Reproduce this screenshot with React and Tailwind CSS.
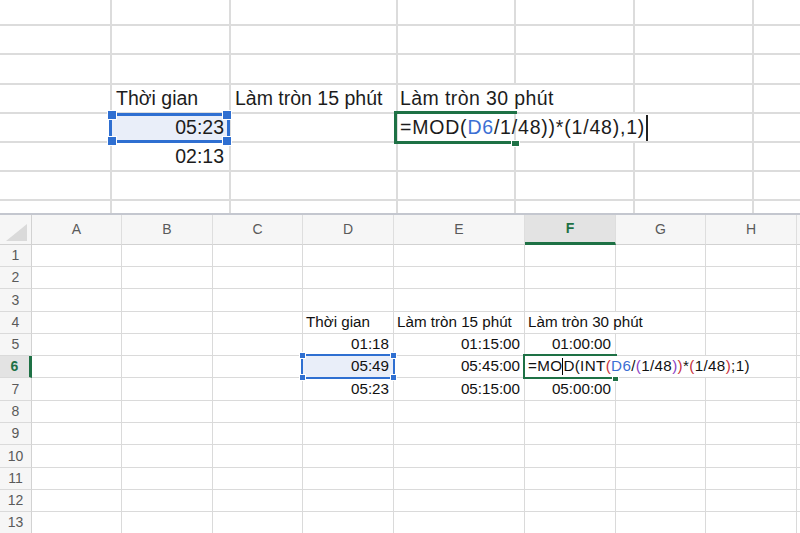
import React from 'react';

const FONT = "font-['Liberation_Sans',Arial,sans-serif]";

// top (zoomed) sheet
const topRowH = ['h-[26px]', 'h-[29px]', 'h-[30px]', 'h-[29px]', 'h-[29px]', 'h-[29px]', 'h-[29px]', 'h-[12px]'];
const topColW = ['w-[112px]', 'w-[119px]', 'w-[167px]', 'w-[118px]', 'w-[119px]', 'w-[119px]', 'w-[46px]'];

const TopFormula = () => (
  <span className="relative z-10 flex items-center tracking-[0.8px]">
    <span>=MOD(</span>
    <span className="text-[#3b6fd4]">D6</span>
    <span>/1/48))*(1/48),1)</span>
    <span className="inline-block w-[2px] h-[26px] bg-[#222] ml-[1px]" />
  </span>
);

const topCells = {
  '3-1': { text: 'Thời gian' },
  '3-2': { text: 'Làm tròn 15 phút' },
  '3-3': { text: 'Làm tròn 30 phút', pad: 'pl-[2px]', noRight: true, wide: true },
  '4-1': { text: '05:23', right: true, bg: 'bg-[#e9eef9]' },
  '4-3': { node: <TopFormula />, pad: 'pl-[2px]' },
  '4-4': { noRight: true },
  '5-1': { text: '02:13', right: true },
};

const TopSheet = () => (
  <div className="flex flex-col h-[213px] overflow-hidden text-[19.5px] text-[#1c1c1c]">
    {topRowH.map((h, r) => (
      <div key={r} className={`flex ${h}`}>
        {topColW.map((w, c) => {
          const cell = topCells[`${r}-${c}`] || {};
          const last = c === topColW.length - 1;
          return (
            <div
              key={c}
              className={`${w} shrink-0 flex items-center whitespace-nowrap overflow-visible
                ${r < 7 ? 'border-b-2' : ''} ${last || cell.noRight ? '' : 'border-r-2'} border-[#dcdcdc]
                ${cell.right ? 'justify-end pr-[5px]' : cell.pad || 'pl-[4px]'} ${cell.bg || ''}
                ${cell.wide ? 'tracking-[0.4px]' : ''}`}
            >
              {cell.node || cell.text}
            </div>
          );
        })}
      </div>
    ))}
  </div>
);

// bottom (normal) sheet
const letters = ['A', 'B', 'C', 'D', 'E', 'F', 'G', 'H'];
const colW = ['w-[90px]', 'w-[91px]', 'w-[90px]', 'w-[91px]', 'w-[131px]', 'w-[91px]', 'w-[90px]', 'w-[91px]'];
const rowH = ['h-[22px]', 'h-[22px]', 'h-[23px]', 'h-[22px]', 'h-[22px]', 'h-[22px]', 'h-[23px]', 'h-[22px]', 'h-[22px]', 'h-[23px]', 'h-[22px]', 'h-[22px]', 'h-[22px]'];

const BottomFormula = () => (
  <span className="relative z-10 flex items-center tracking-[0.35px]">
    <span>=MO</span>
    <span className="inline-block w-[1px] h-[17px] bg-black" />
    <span>D(INT</span>
    <span className="text-[#c8323c]">(</span>
    <span className="text-[#3b6fd4]">D6</span>
    <span>/</span>
    <span className="text-[#8a3fc4]">(</span>
    <span>1/48</span>
    <span className="text-[#8a3fc4]">)</span>
    <span className="text-[#c8323c]">)</span>
    <span>*</span>
    <span className="text-[#c8323c]">(</span>
    <span>1/48</span>
    <span className="text-[#c8323c]">)</span>
    <span>;1)</span>
  </span>
);

const cells = {
  '4-3': { text: 'Thời gian' },
  '4-4': { text: 'Làm tròn 15 phút' },
  '4-5': { text: 'Làm tròn 30 phút', noRight: true },
  '5-3': { text: '01:18', right: true },
  '5-4': { text: '01:15:00', right: true },
  '5-5': { text: '01:00:00', right: true },
  '6-3': { text: '05:49', right: true, bg: 'bg-[#e9eef9]' },
  '6-4': { text: '05:45:00', right: true },
  '6-5': { node: <BottomFormula />, noRight: true },
  '6-6': { noRight: true },
  '7-3': { text: '05:23', right: true },
  '7-4': { text: '05:15:00', right: true },
  '7-5': { text: '05:00:00', right: true },
};

const BottomSheet = () => (
  <div className="flex flex-col text-[15.2px] text-[#111]">
    <div className="flex h-[32px] border-t-2 border-[#c4c7cf] bg-[#f6f6f6] text-[#5a5a5a] text-[14px]">
      <div className="w-[32px] shrink-0 border-r border-b border-[#d2d2d2] flex items-end justify-end pr-[4px] pb-[3px]">
        <svg width="21" height="17" viewBox="0 0 21 17">
          <polygon points="21,0 21,17 0,17" fill="#dadada" />
        </svg>
      </div>
      {letters.map((l, i) => (
        <div
          key={l}
          className={`${colW[i]} shrink-0 flex items-center justify-center border-r border-[#dedede]
            ${l === 'F' ? 'bg-[#e3e3e3] text-[#1e7145] font-bold border-b-[3px] border-b-[#1e7145]' : 'border-b border-b-[#d2d2d2]'}`}
        >
          {l}
        </div>
      ))}
      <div className="flex-1 border-b border-[#d2d2d2]" />
    </div>
    {rowH.map((h, ri) => {
      const r = ri + 1;
      const active = r === 6;
      return (
        <div key={r} className={`flex ${h}`}>
          <div
            className={`w-[32px] shrink-0 flex items-center justify-center border-b border-[#dadada] text-[14px]
              ${active ? 'bg-[#e3e3e3] text-[#1e7145] font-bold border-r-[3px] border-r-[#1e7145]' : 'bg-[#f6f6f6] text-[#5a5a5a] border-r border-r-[#d2d2d2]'}`}
          >
            {r}
          </div>
          {colW.map((w, c) => {
            const cell = cells[`${r}-${c}`] || {};
            return (
              <div
                key={c}
                className={`${w} shrink-0 flex items-center whitespace-nowrap border-b border-[#dadada]
                  ${cell.noRight ? '' : 'border-r'} ${cell.right ? 'justify-end pr-[4px]' : 'pl-[3px]'} ${cell.bg || ''}`}
              >
                {cell.node || cell.text}
              </div>
            );
          })}
          <div className="flex-1 border-b border-[#dadada]" />
        </div>
      );
    })}
  </div>
);

const Handle = ({ cls }) => (
  <div className={`absolute bg-[#2f6fd1] border border-white ${cls}`} />
);

export default function App() {
  return (
    <div className={`relative w-[800px] h-[533px] overflow-hidden bg-white ${FONT}`}>
      <TopSheet />
      <BottomSheet />

      {/* top selection (blue) */}
      <div className="absolute left-[108px] top-[112px] w-[123px] h-[32px] pointer-events-none">
        <div className="absolute left-[4px] right-[4px] top-[1px] h-[3px] bg-[#2f6fd1]" />
        <div className="absolute left-[4px] right-[4px] bottom-[1px] h-[3px] bg-[#2f6fd1]" />
        <div className="absolute left-[1px] top-[4px] bottom-[4px] w-[3px] bg-[#2f6fd1]" />
        <div className="absolute right-[1px] top-[4px] bottom-[4px] w-[3px] bg-[#2f6fd1]" />
        <Handle cls="left-[-1px] top-[-2px] w-[10px] h-[10px]" />
        <Handle cls="right-[-1px] top-[-2px] w-[10px] h-[10px]" />
        <Handle cls="left-[-1px] bottom-[-2px] w-[10px] h-[10px]" />
        <Handle cls="right-[-1px] bottom-[-2px] w-[10px] h-[10px]" />
      </div>

      {/* top active cell (green) */}
      <div className="absolute left-[394px] top-[111px] w-[123px] h-[33px] border-[3px] border-[#1e7145] border-r-0 pointer-events-none" />
      <div className="absolute left-[511px] top-[140px] w-[9px] h-[7px] bg-[#1e7145] border border-white pointer-events-none" />

      {/* bottom selection D6 (blue) */}
      <div className="absolute left-[301px] top-[354px] w-[94px] h-[25px] pointer-events-none">
        <div className="absolute left-[3px] right-[3px] top-[0px] h-[2px] bg-[#2f6fd1]" />
        <div className="absolute left-[3px] right-[3px] bottom-[0px] h-[2px] bg-[#2f6fd1]" />
        <div className="absolute left-[0px] top-[3px] bottom-[3px] w-[2px] bg-[#2f6fd1]" />
        <div className="absolute right-[0px] top-[3px] bottom-[3px] w-[2px] bg-[#2f6fd1]" />
        <Handle cls="left-[-2px] top-[-2px] w-[7px] h-[7px]" />
        <Handle cls="right-[-2px] top-[-2px] w-[7px] h-[7px]" />
        <Handle cls="left-[-2px] bottom-[-2px] w-[7px] h-[7px]" />
        <Handle cls="right-[-2px] bottom-[-2px] w-[7px] h-[7px]" />
      </div>

      {/* bottom active cell F6 (green) */}
      <div className="absolute left-[523px] top-[354px] w-[94px] h-[25px] border-2 border-[#1e7145] border-r-0 pointer-events-none" />
      <div className="absolute left-[612px] top-[376px] w-[7px] h-[6px] bg-[#1e7145] border border-white pointer-events-none" />
    </div>
  );
}
